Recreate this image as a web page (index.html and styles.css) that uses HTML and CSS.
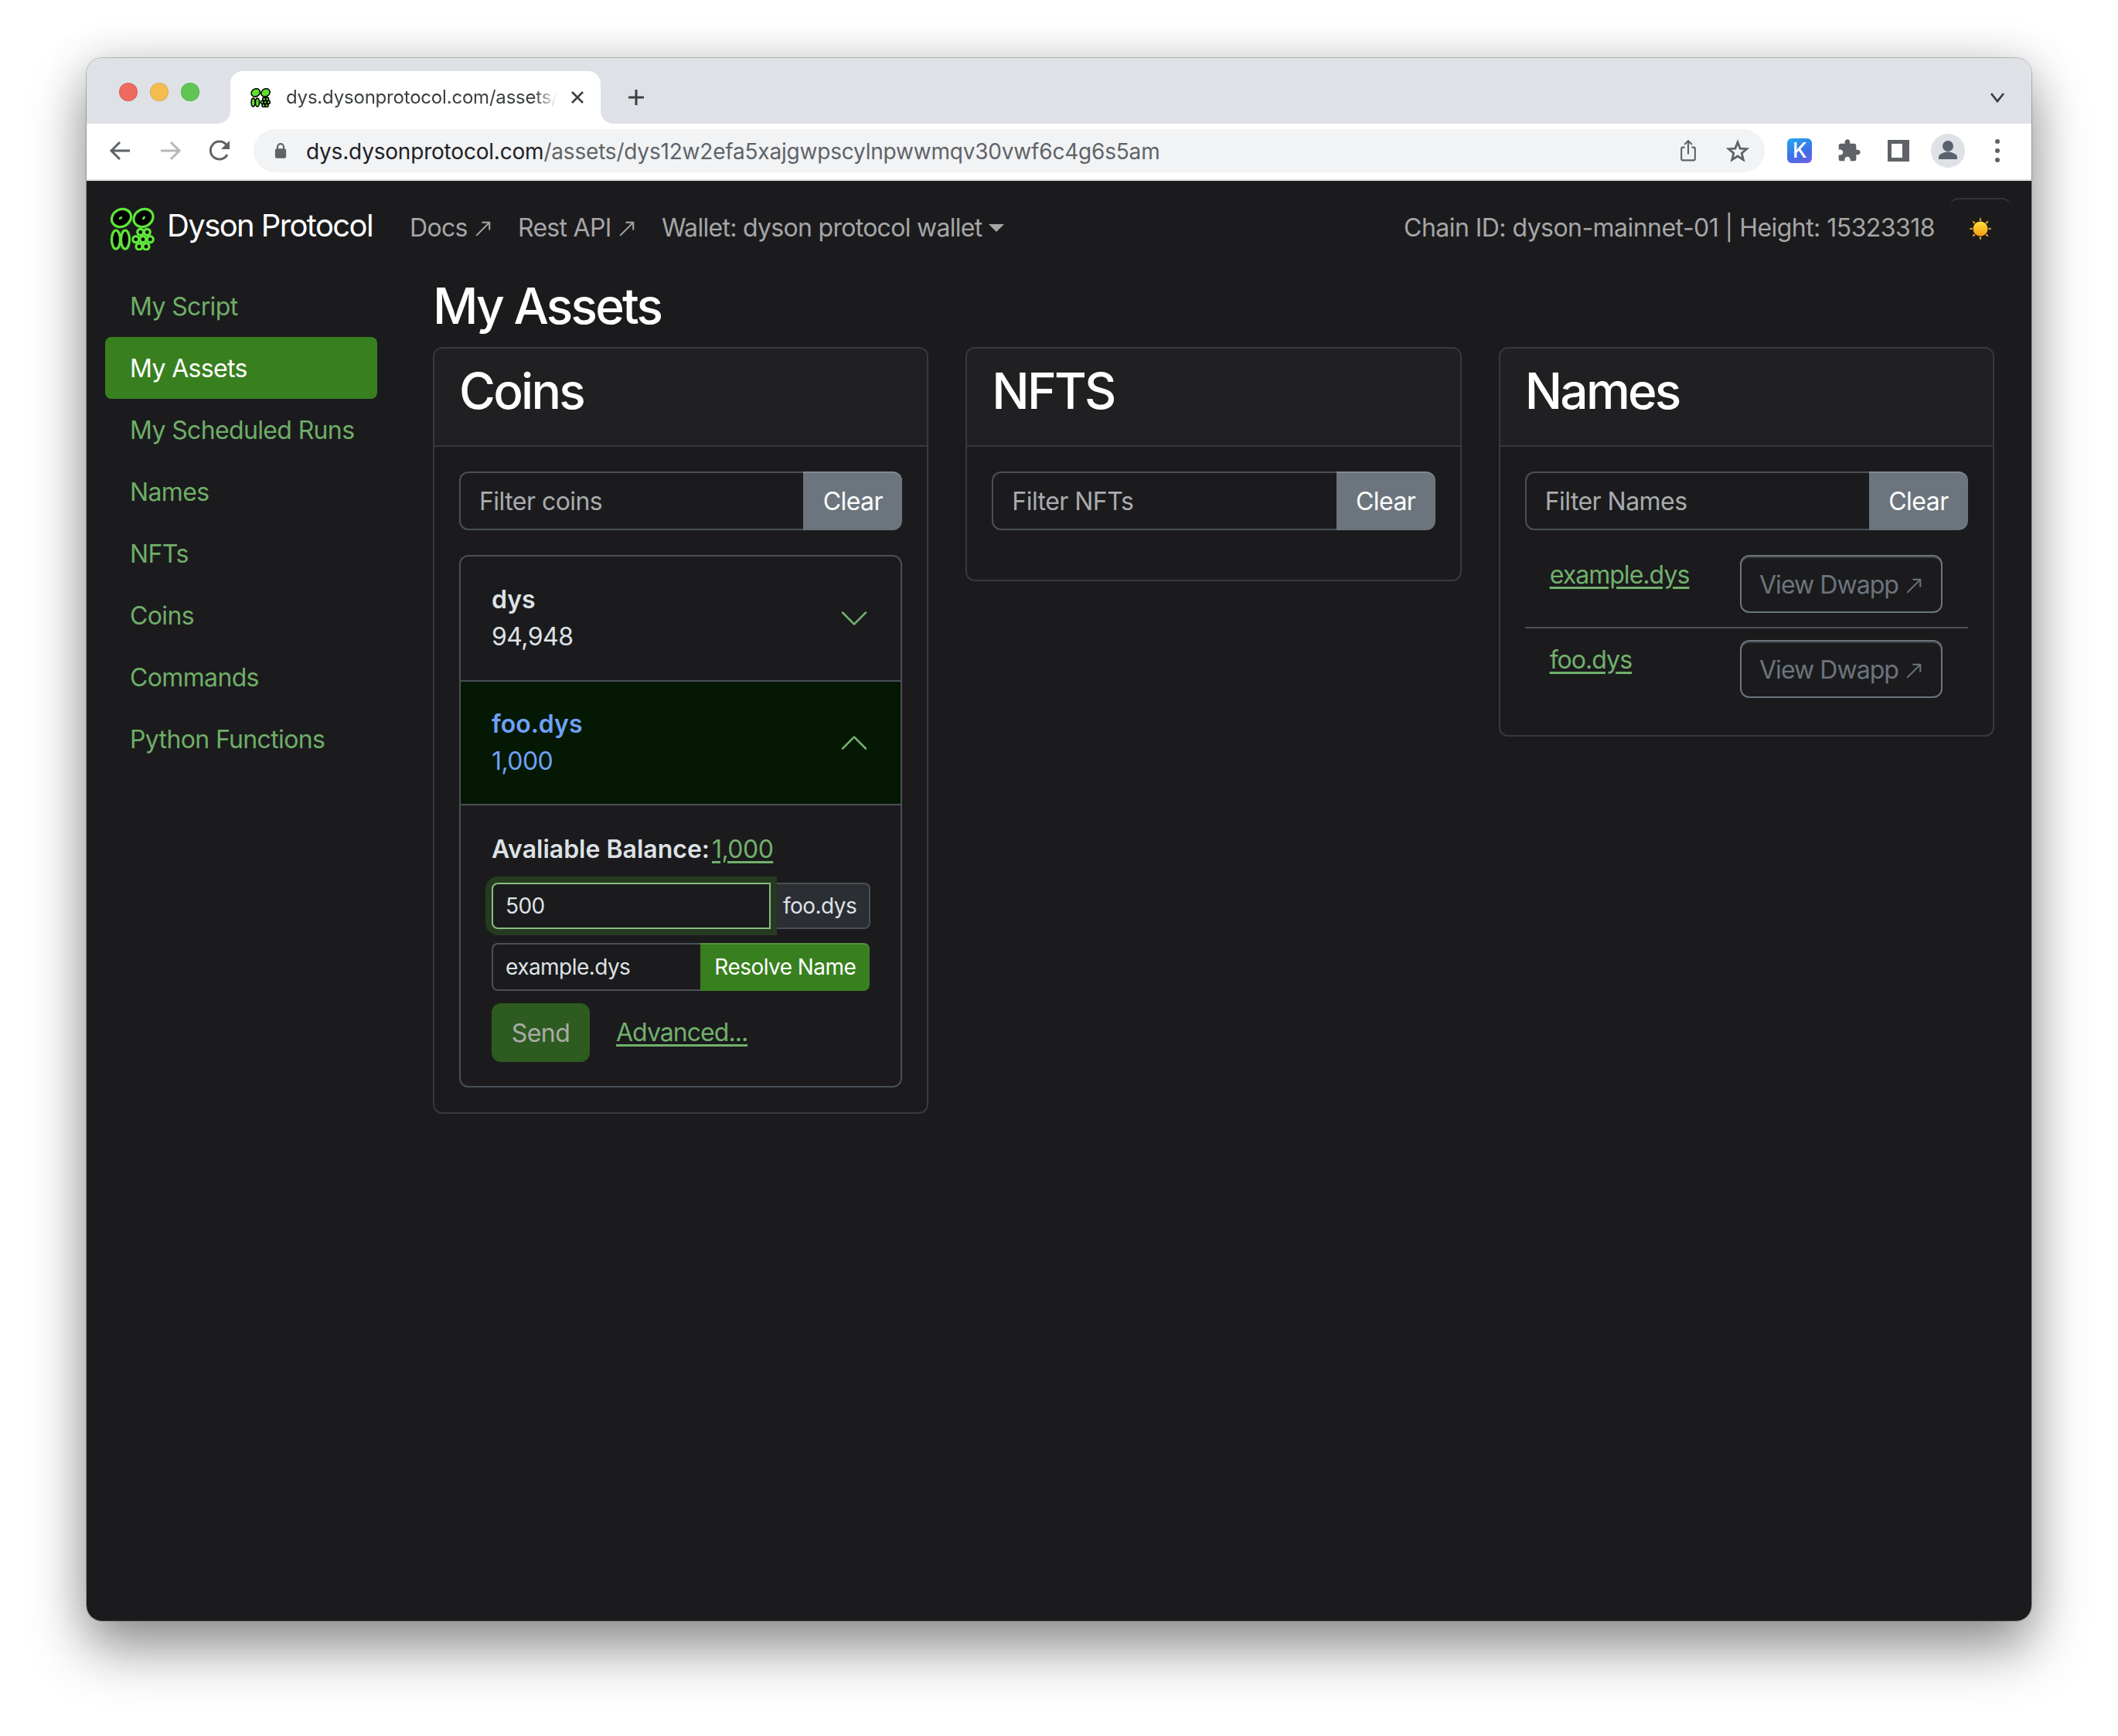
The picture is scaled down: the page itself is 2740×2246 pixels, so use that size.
FILE: index.html
```html
<!DOCTYPE html>
<html lang="en">

<head>
    <meta charset="UTF-8">
    <meta name="viewport" content="width=device-width, initial-scale=1.0">
    <title>Dyson Protocol</title>
    <link rel="stylesheet" href="styles.css">
</head>

<body>
    <div class="window">
        <!-- Browser tab strip -->
        <div class="tabstrip">
            <div class="lights">
                <span class="light red"></span>
                <span class="light yellow"></span>
                <span class="light green"></span>
            </div>
            <div class="tab">
                <svg class="favicon" viewBox="12 15 58 57">
                    <g fill="#5fe02f" stroke="#000" stroke-width="3.4">
                        <ellipse cx="27" cy="30" rx="13" ry="11" transform="rotate(-30 27 30)" />
                        <ellipse cx="55.500" cy="30" rx="13" ry="11" transform="rotate(-30 55.500 30)" />
                        <ellipse cx="20" cy="58" rx="5.500" ry="12" />
                        <ellipse cx="32" cy="58" rx="5.500" ry="12" />
                        <circle cx="51.700" cy="48.300" r="4.500" />
                        <circle cx="60.300" cy="48.300" r="4.500" />
                        <circle cx="45.700" cy="57.700" r="4.500" />
                        <circle cx="55" cy="57.700" r="4.500" />
                        <circle cx="64.300" cy="57.700" r="4.500" />
                        <circle cx="50" cy="67" r="4.500" />
                        <circle cx="59" cy="67" r="4.500" />
                    </g>
                </svg>
                <span class="tab-title">dys.dysonprotocol.com/assets/dys12w2efa5xajgwpscylnpwwmqv30vwf6c4g6s5am</span>
                <svg class="tab-close" viewBox="0 0 20 20">
                    <path d="M3 3l14 14M17 3L3 17" />
                </svg>
            </div>
            <svg class="new-tab" viewBox="0 0 24 24">
                <path d="M12 2v20M2 12h20" />
            </svg>
            <svg class="tab-menu" viewBox="0 0 20 14">
                <path d="M2 2l8 10 8-10" />
            </svg>
        </div>

        <!-- Browser toolbar -->
        <div class="toolbar">
            <div class="tool">
                <svg viewBox="0 0 30 30" class="stroke-icon">
                    <path d="M27 15H4M14 4L3 15l11 11" />
                </svg>
            </div>
            <div class="tool dim">
                <svg viewBox="0 0 30 30" class="stroke-icon">
                    <path d="M3 15h23M16 4l11 11-11 11" />
                </svg>
            </div>
            <div class="tool">
                <svg viewBox="0 0 30 30" class="reload-icon">
                    <path class="arc" d="M25 20a11.500 11.500 0 1 1-1.500-13" />
                    <path class="head" d="M28 2v11H17z" />
                </svg>
            </div>
            <div class="omnibox">
                <svg class="lock" viewBox="0 0 18 24">
                    <path d="M4.500 10V6.500a4.500 4.500 0 0 1 9 0V10" class="shackle" />
                    <rect x="1" y="9" width="16" height="14" rx="2.500" />
                </svg>
                <span class="url"><span class="host">dys.dysonprotocol.com</span>/assets/dys12w2efa5xajgwpscylnpwwmqv30vwf6c4g6s5am</span>
                <svg class="omni-icon share" viewBox="0 0 24 34">
                    <path d="M7 12H4a2 2 0 0 0-2 2v15a2 2 0 0 0 2 2h16a2 2 0 0 0 2-2V14a2 2 0 0 0-2-2h-3M12 22V3M6.500 8L12 2.500 17.500 8" />
                </svg>
                <svg class="omni-icon star" viewBox="0 0 30 30">
                    <path d="M15 4l3.200 8.100 8.600.6-6.600 5.500 2.100 8.400L15 22l-7.300 4.600 2.100-8.400-6.600-5.500 8.600-.6z" />
                </svg>
            </div>
            <div class="tool">
                <span class="ext-k">K</span>
            </div>
            <div class="tool">
                <svg class="puzzle" viewBox="0 0 24 24">
                    <path d="M20.500 11H19V7c0-1.100-.9-2-2-2h-4V3.500C13 2.120 11.880 1 10.500 1S8 2.120 8 3.500V5H4c-1.100 0-1.990.9-1.990 2v3.800H3.500c1.490 0 2.700 1.210 2.700 2.700s-1.210 2.700-2.700 2.700H2V20c0 1.100.9 2 2 2h3.800v-1.500c0-1.490 1.210-2.700 2.700-2.700 1.490 0 2.700 1.210 2.700 2.700V22H17c1.100 0 2-.9 2-2v-4h1.500c1.380 0 2.500-1.120 2.500-2.500S21.880 11 20.500 11z" />
                </svg>
            </div>
            <div class="tool">
                <span class="side-panel"></span>
            </div>
            <div class="tool">
                <span class="avatar">
                    <svg viewBox="0 0 44 44">
                        <circle cx="22" cy="16" r="7" />
                        <path d="M10 33v-3c0-4 8-6.500 12-6.500s12 2.500 12 6.500v3z" />
                    </svg>
                </span>
            </div>
            <div class="tool">
                <span class="dots"><i></i><i></i><i></i></span>
            </div>
        </div>

        <!-- Page -->
        <div class="page">
            <nav class="navbar">
                <div class="brand">
                    <svg class="logo" viewBox="12 15 58 57">
                        <g fill="#000" stroke="#5fe63a" stroke-width="3.200">
                            <ellipse cx="27" cy="30" rx="13" ry="11" transform="rotate(-30 27 30)" />
                            <ellipse cx="55.500" cy="30" rx="13" ry="11" transform="rotate(-30 55.500 30)" />
                            <ellipse cx="20" cy="58" rx="5.500" ry="12" />
                            <ellipse cx="32" cy="58" rx="5.500" ry="12" />
                            <circle cx="51.700" cy="48.300" r="4" />
                            <circle cx="60.300" cy="48.300" r="4" />
                            <circle cx="45.700" cy="57.700" r="4" />
                            <circle cx="55" cy="57.700" r="4" />
                            <circle cx="64.300" cy="57.700" r="4" />
                            <circle cx="50" cy="67" r="4" />
                            <circle cx="59" cy="67" r="4" />
                        </g>
                        <g fill="#5fe63a">
                            <ellipse cx="26" cy="30" rx="2.500" ry="1.500" transform="rotate(-30 26 30)" />
                            <ellipse cx="56" cy="30" rx="2.500" ry="1.500" transform="rotate(-50 56 30)" />
                        </g>
                    </svg>
                    Dyson Protocol
                </div>
                <ul class="nav-links">
                    <li>Docs
                        <svg class="out-arrow" viewBox="0 0 16 16">
                            <path d="M14 2.500a.5.500 0 0 0-.5-.5h-6a.5.500 0 0 0 0 1h4.793L2.146 13.146a.5.500 0 0 0 .708.708L13 3.707V8.500a.5.500 0 0 0 1 0v-6z" />
                        </svg>
                    </li>
                    <li>Rest API
                        <svg class="out-arrow" viewBox="0 0 16 16">
                            <path d="M14 2.500a.5.500 0 0 0-.5-.5h-6a.5.500 0 0 0 0 1h4.793L2.146 13.146a.5.500 0 0 0 .708.708L13 3.707V8.500a.5.500 0 0 0 1 0v-6z" />
                        </svg>
                    </li>
                    <li class="dropdown">Wallet: dyson protocol wallet</li>
                </ul>
                <span class="chain-info">Chain ID: dyson-mainnet-01 | Height: 15323318</span>
                <button class="theme-toggle">
                    <svg viewBox="0 0 30 30">
                        <defs>
                            <linearGradient id="sun" x1="0" y1="0" x2="0" y2="1">
                                <stop offset="0" stop-color="#ffe03c" />
                                <stop offset="1" stop-color="#f79a12" />
                            </linearGradient>
                        </defs>
                        <g fill="#f5a623">
                            <path d="M15 0l1.600 4.500h-3.200zM15 30l-1.600-4.500h3.200zM0 15l4.500-1.600v3.200zM30 15l-4.500 1.600v-3.200zM4.400 4.400l4.300 2-2.300 2.300zM25.600 25.600l-4.300-2 2.300-2.300zM25.600 4.400l-2 4.300-2.300-2.300zM4.400 25.600l2-4.300 2.300 2.300z" />
                        </g>
                        <circle cx="15" cy="15" r="9.500" fill="url(#sun)" />
                    </svg>
                </button>
            </nav>

            <div class="content">
                <ul class="sidebar">
                    <li>My Script</li>
                    <li class="active">My Assets</li>
                    <li>My Scheduled Runs</li>
                    <li>Names</li>
                    <li>NFTs</li>
                    <li>Coins</li>
                    <li>Commands</li>
                    <li>Python Functions</li>
                </ul>

                <main class="main">
                    <h2 class="page-title">My Assets</h2>
                    <div class="cards">
                        <!-- Coins -->
                        <section class="card">
                            <header class="card-header">
                                <h2>Coins</h2>
                            </header>
                            <div class="card-body">
                                <div class="input-group">
                                    <input class="filter" placeholder="Filter coins">
                                    <button class="btn-clear">Clear</button>
                                </div>
                                <div class="accordion">
                                    <div class="acc-item">
                                        <div class="acc-text">
                                            <strong>dys</strong>
                                            <span>94,948</span>
                                        </div>
                                        <svg class="chevron" viewBox="0 0 16 16">
                                            <path d="M1.646 4.646a.5.500 0 0 1 .708 0L8 10.293l5.646-5.647a.5.500 0 0 1 .708.708l-6 6a.5.500 0 0 1-.708 0l-6-6a.5.500 0 0 1 0-.708z" />
                                        </svg>
                                    </div>
                                    <div class="acc-item open">
                                        <div class="acc-text">
                                            <strong>foo.dys</strong>
                                            <span>1,000</span>
                                        </div>
                                        <svg class="chevron up" viewBox="0 0 16 16">
                                            <path d="M1.646 4.646a.5.500 0 0 1 .708 0L8 10.293l5.646-5.647a.5.500 0 0 1 .708.708l-6 6a.5.500 0 0 1-.708 0l-6-6a.5.500 0 0 1 0-.708z" />
                                        </svg>
                                    </div>
                                    <div class="acc-panel">
                                        <p class="balance"><strong>Avaliable Balance:</strong><a class="link">1,000</a></p>
                                        <div class="sm-group amount">
                                            <input class="sm-input focused" value="500">
                                            <span class="addon">foo.dys</span>
                                        </div>
                                        <div class="sm-group">
                                            <input class="sm-input" value="example.dys">
                                            <button class="btn-resolve">Resolve Name</button>
                                        </div>
                                        <div class="send-row">
                                            <button class="btn-send">Send</button>
                                            <a class="link">Advanced...</a>
                                        </div>
                                    </div>
                                </div>
                            </div>
                        </section>

                        <!-- NFTs -->
                        <section class="card">
                            <header class="card-header">
                                <h2>NFTS</h2>
                            </header>
                            <div class="card-body">
                                <div class="input-group">
                                    <input class="filter" placeholder="Filter NFTs">
                                    <button class="btn-clear">Clear</button>
                                </div>
                                <div class="empty-list"></div>
                            </div>
                        </section>

                        <!-- Names -->
                        <section class="card">
                            <header class="card-header">
                                <h2>Names</h2>
                            </header>
                            <div class="card-body">
                                <div class="input-group">
                                    <input class="filter" placeholder="Filter Names">
                                    <button class="btn-clear">Clear</button>
                                </div>
                                <ul class="name-list">
                                    <li>
                                        <a class="link">example.dys</a>
                                        <button class="btn-dwapp">View Dwapp
                                            <svg class="out-arrow" viewBox="0 0 16 16">
                                                <path d="M14 2.500a.5.500 0 0 0-.5-.5h-6a.5.500 0 0 0 0 1h4.793L2.146 13.146a.5.500 0 0 0 .708.708L13 3.707V8.500a.5.500 0 0 0 1 0v-6z" />
                                            </svg>
                                        </button>
                                    </li>
                                    <li>
                                        <a class="link">foo.dys</a>
                                        <button class="btn-dwapp">View Dwapp
                                            <svg class="out-arrow" viewBox="0 0 16 16">
                                                <path d="M14 2.500a.5.500 0 0 0-.5-.5h-6a.5.500 0 0 0 0 1h4.793L2.146 13.146a.5.500 0 0 0 .708.708L13 3.707V8.500a.5.500 0 0 0 1 0v-6z" />
                                            </svg>
                                        </button>
                                    </li>
                                </ul>
                            </div>
                        </section>
                    </div>
                </main>
            </div>
        </div>
    </div>
</body>

</html>
```

FILE: styles.css
```css
* {
    box-sizing: border-box;
}

body {
    margin: 0;
    padding: 75px 112px 0;
    height: 2246px;
    background-color: #fff;
    font-family: Inter, "Liberation Sans", sans-serif;
    font-size: 32px;
    line-height: 1.5;
    letter-spacing: -0.017em;
    color: #dee2e6;
    overflow: hidden;
}

h2,
p,
ul {
    margin: 0;
    padding: 0;
}

ul {
    list-style: none;
}

input,
button {
    font-family: inherit;
    letter-spacing: inherit;
}

/* Browser window */
.window {
    width: 2516px;
    height: 2022px;
    border-radius: 20px;
    overflow: hidden;
    display: flex;
    flex-direction: column;
    box-shadow: 0 0 0 1px rgba(0, 0, 0, 0.22), 0 36px 72px rgba(0, 0, 0, 0.42), 0 0 60px rgba(0, 0, 0, 0.12);
}

.tabstrip {
    height: 85px;
    flex: none;
    display: flex;
    align-items: flex-end;
    background-color: #dee1e6;
    position: relative;
}

.lights {
    display: flex;
    gap: 16px;
    margin: 0 40px 29px 42px;
}

.light {
    width: 24px;
    height: 24px;
    border-radius: 50%;
    border: 1px solid rgba(0, 0, 0, 0.1);
}

.red {
    background-color: #ee6a5f;
}

.yellow {
    background-color: #f5bd4f;
}

.green {
    background-color: #61c554;
}

.tab {
    width: 479px;
    height: 68px;
    background-color: #fff;
    border-radius: 16px 16px 0 0;
    display: flex;
    align-items: center;
    padding: 0 20px 0 26px;
    position: relative;
}

.tab::before,
.tab::after {
    content: "";
    position: absolute;
    bottom: 0;
    width: 16px;
    height: 16px;
}

.tab::before {
    left: -16px;
    background: radial-gradient(circle at 0 0, #dee1e6 15.500px, #fff 16px);
}

.tab::after {
    right: -16px;
    background: radial-gradient(circle at 100% 0, #dee1e6 15.500px, #fff 16px);
}

.favicon {
    width: 26px;
    height: 26px;
    flex: none;
    margin-right: 20px;
}

.tab-title {
    width: 350px;
    flex: none;
    overflow: hidden;
    white-space: nowrap;
    font-size: 24px;
    line-height: 32px;
    letter-spacing: -0.2px;
    color: #3c4043;
    -webkit-mask-image: linear-gradient(to right, #000 92%, transparent 100%);
    mask-image: linear-gradient(to right, #000 92%, transparent 100%);
}

.tab-close {
    width: 20px;
    height: 20px;
    margin-left: 17px;
    fill: none;
    stroke: #3c4043;
    stroke-width: 2.600;
}

.new-tab {
    width: 24px;
    height: 24px;
    margin: 0 0 22px 34px;
    fill: none;
    stroke: #3c4043;
    stroke-width: 3;
}

.tab-menu {
    width: 20px;
    height: 14px;
    margin: 0 34px 27px auto;
    fill: none;
    stroke: #3c4043;
    stroke-width: 2.800;
}

.toolbar {
    height: 74px;
    flex: none;
    display: flex;
    align-items: center;
    padding: 0 12px 2px;
    background-color: #fff;
    border-bottom: 2px solid #dcdde0;
}

.tool {
    width: 64px;
    height: 56px;
    flex: none;
    display: flex;
    align-items: center;
    justify-content: center;
}

.stroke-icon {
    width: 30px;
    height: 30px;
    fill: none;
    stroke: #5f6368;
    stroke-width: 3;
}

.dim {
    opacity: 0.45;
}

.reload-icon {
    width: 30px;
    height: 30px;
}

.reload-icon .arc {
    fill: none;
    stroke: #5f6368;
    stroke-width: 3;
}

.reload-icon .head {
    fill: #5f6368;
}

.omnibox {
    width: 1955px;
    height: 56px;
    flex: none;
    margin: 0 13px 0 12px;
    padding: 0 26px 0 27px;
    border-radius: 28px;
    background-color: #f1f3f4;
    display: flex;
    align-items: center;
}

.lock {
    width: 16px;
    height: 22px;
    margin-right: 25px;
    fill: #5f6368;
}

.lock .shackle {
    fill: none;
    stroke: #5f6368;
    stroke-width: 2.400;
}

.url {
    flex: 1;
    font-size: 28px;
    line-height: 36px;
    white-space: nowrap;
    letter-spacing: -0.2px;
    padding-top: 2px;
    color: #5f6368;
}

.host {
    color: #202124;
}

.omni-icon {
    flex: none;
    fill: none;
    stroke: #5f6368;
    stroke-width: 2.400;
}

.share {
    width: 22px;
    height: 30px;
    margin-right: 38px;
}

.star {
    width: 30px;
    height: 30px;
    margin-right: -6px;
    stroke-width: 2.800;
}

.ext-k {
    width: 32px;
    height: 32px;
    border-radius: 6px;
    background: linear-gradient(160deg, #22a8ee, #3f6fe6 60%, #7360e0);
    color: #fff;
    font-size: 27px;
    font-weight: 500;
    line-height: 32px;
    text-align: center;
}

.puzzle {
    width: 32px;
    height: 32px;
    fill: #5f6368;
}

.side-panel {
    width: 28px;
    height: 28px;
    border: solid #5f6368;
    border-width: 5px 9px 5px 5px;
}

.avatar {
    width: 44px;
    height: 44px;
    border-radius: 50%;
    background-color: #dee1e6;
}

.avatar svg {
    display: block;
    width: 44px;
    height: 44px;
    fill: #5a6270;
}

.dots {
    display: flex;
    flex-direction: column;
    gap: 6px;
}

.dots i {
    width: 6px;
    height: 6px;
    border-radius: 50%;
    background-color: #5f6368;
}

/* Page */
.page {
    flex: 1;
    min-height: 0;
    background-color: #1b1b1d;
    padding: 0 48px 0 24px;
}

.navbar {
    height: 122px;
    display: flex;
    align-items: center;
    padding-left: 6px;
    margin-right: -22px;
    position: relative;
}

.brand {
    display: flex;
    align-items: center;
    gap: 16px;
    font-size: 40px;
    line-height: 60px;
    letter-spacing: -0.04em;
    color: #fff;
    margin-top: -6px;
}

.logo {
    width: 58px;
    height: 57px;
    margin-top: 6px;
}

.nav-links {
    display: flex;
    gap: 33px;
    margin-left: 48px;
    letter-spacing: -0.022em;
    color: #a6a6a7;
}

.out-arrow {
    width: 24px;
    height: 24px;
    vertical-align: -2px;
    fill: currentColor;
    stroke: currentColor;
    stroke-width: 0.4;
}

.dropdown::after {
    content: "";
    display: inline-block;
    margin-left: 8px;
    vertical-align: 6px;
    border-top: 10px solid;
    border-left: 10px solid transparent;
    border-right: 10px solid transparent;
}

.chain-info {
    margin-left: auto;
    color: #a6a6a7;
}

.theme-toggle {
    width: 80px;
    height: 78px;
    margin: 0 0 0 19px;
    padding: 0;
    border: none;
    border-top: 2px solid #333436;
    border-radius: 12px;
    background-color: #1b1b1d;
    display: flex;
    align-items: center;
    justify-content: center;
}

.theme-toggle svg {
    width: 30px;
    height: 30px;
}

.content {
    display: flex;
    align-items: flex-start;
}

.sidebar {
    width: 352px;
    flex: none;
    margin-right: 72px;
    letter-spacing: -0.02em;
    color: #6fae68;
}

.sidebar li {
    height: 80px;
    padding: 17px 32px 15px;
    border-radius: 8px;
    white-space: nowrap;
}

.sidebar .active {
    background-color: #38801f;
    color: #fff;
}

.main {
    flex: 1;
    min-width: 0;
    padding-top: 1px;
}

.page-title {
    font-size: 64px;
    font-weight: 500;
    line-height: 77px;
    letter-spacing: -0.043em;
    color: #fff;
    margin-bottom: 15px;
}

.cards {
    display: grid;
    grid-template-columns: repeat(3, minmax(0, 1fr));
    gap: 48px;
    align-items: start;
}

.card {
    border: 2px solid #38393c;
    border-radius: 12px;
}

.card-header {
    height: 127px;
    padding: 16px 32px;
    background-color: #202022;
    border-bottom: 2px solid #38393c;
    border-radius: 10px 10px 0 0;
}

.card-header h2 {
    font-size: 64px;
    font-weight: 500;
    line-height: 77px;
    letter-spacing: -0.043em;
    color: #fff;
}

.card-body {
    padding: 32px;
}

.input-group {
    display: flex;
    height: 76px;
    margin-bottom: 16px;
}

.filter {
    flex: 1;
    min-width: 0;
    padding: 0 24px;
    font-size: 32px;
    color: #dee2e6;
    background-color: #1b1b1d;
    border: 2px solid #495057;
    border-right: none;
    border-radius: 12px 0 0 12px;
    outline: none;
}

.filter::placeholder {
    color: #a9abad;
    opacity: 1;
}

.btn-clear {
    width: 128px;
    flex: none;
    padding: 0;
    border: none;
    border-radius: 0 12px 12px 0;
    background-color: #6c757d;
    color: #fff;
    font-size: 32px;
    box-shadow: inset 0 2px 0 rgba(255, 255, 255, 0.15);
}

.empty-list {
    height: 16px;
}

/* Accordion */
.accordion {
    margin-top: 32px;
    border: 2px solid #495057;
    border-radius: 12px;
}

.acc-item {
    height: 160px;
    padding: 32px 40px;
    display: flex;
    align-items: center;
    justify-content: space-between;
    border-bottom: 2px solid #495057;
}

.acc-item:first-child {
    height: 162px;
}

.acc-item.open {
    background-color: #041804;
    color: #6ea2f5;
}

.acc-text {
    display: flex;
    flex-direction: column;
}

.acc-text strong {
    font-weight: 600;
    letter-spacing: 0;
}

.chevron {
    width: 40px;
    height: 40px;
    flex: none;
    fill: #72b06c;
}

.chevron.up {
    transform: rotate(180deg);
}

.acc-panel {
    padding: 32px 40px 31px;
}

.balance {
    margin: 1px 0 19px;
}

.balance strong {
    font-weight: 600;
    letter-spacing: 0;
    margin-right: 3px;
}

.link {
    color: #72b06c;
    text-decoration: underline;
    text-underline-offset: 4px;
    letter-spacing: -0.03em;
}

.balance .link {
    letter-spacing: inherit;
}

.sm-group {
    display: flex;
    height: 62px;
    margin-bottom: 16px;
    font-size: 28px;
}

.sm-input {
    flex: 1;
    min-width: 0;
    padding: 0 16px;
    font-size: 28px;
    color: #dee2e6;
    background-color: #1b1b1d;
    border: 2px solid #495057;
    border-right: none;
    border-radius: 8px 0 0 8px;
    outline: none;
}

.sm-input.focused {
    flex: none;
    width: 361px;
    height: 60px;
    border: 2px solid #8abb82;
    border-radius: 8px 0 0 8px;
    box-shadow: 0 0 0 8px #263a20;
    position: relative;
    z-index: 1;
}

.amount {
    height: 60px;
    margin-bottom: 18px;
}

.addon {
    flex: 1;
    padding: 0 16px;
    display: flex;
    align-items: center;
    background-color: #2b2e33;
    border: 2px solid #495057;
    border-left: none;
    border-radius: 0 8px 8px 0;
    color: #dee2e6;
}

.btn-resolve {
    width: 219px;
    flex: none;
    padding: 0;
    border: none;
    border-radius: 0 8px 8px 0;
    background-color: #38801f;
    color: #fff;
    font-size: 28px;
    box-shadow: inset 0 2px 0 rgba(255, 255, 255, 0.15);
}

.send-row {
    display: flex;
    align-items: center;
    gap: 34px;
}

.btn-send {
    width: 127px;
    height: 76px;
    padding: 0;
    border: none;
    border-radius: 12px;
    background-color: #2e5b20;
    color: #a9ada7;
    font-size: 32px;
}

/* Names */
.name-list li {
    padding: 16px 33px 18px 32px;
    display: flex;
    align-items: flex-start;
    justify-content: space-between;
}

.name-list li + li {
    padding: 15px 33px 16px 32px;
    border-top: 2px solid #495057;
}

.name-list .link {
    margin-top: 2px;
}

.btn-dwapp {
    width: 262px;
    height: 75px;
    padding: 2px 0 0;
    border: 2px solid #6c757d;
    border-radius: 12px;
    background-color: transparent;
    color: #6c757d;
    font-size: 32px;
    letter-spacing: -0.03em;
    box-shadow: inset 0 2px 0 rgba(255, 255, 255, 0.15);
}
```
